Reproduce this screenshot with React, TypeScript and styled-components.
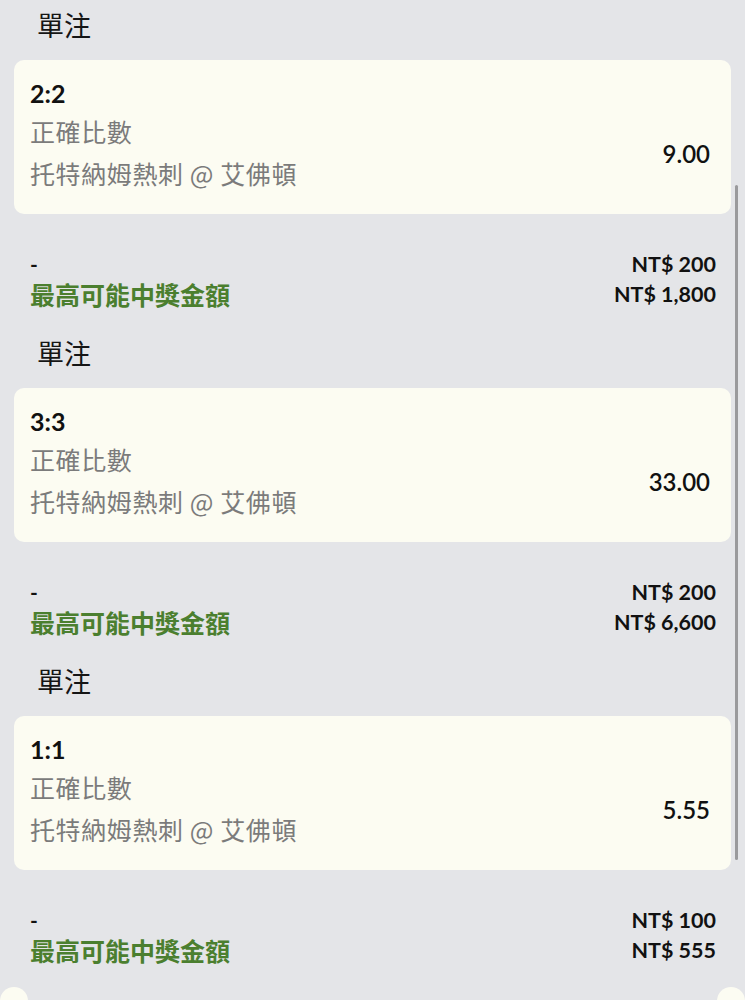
import React from 'react';
import styled, { createGlobalStyle } from 'styled-components';

interface Bet {
  score: string;
  market: string;
  match: string;
  odds: string;
  stake: string;
  payout: string;
}

const bets: Bet[] = [
  { score: '2:2', market: '正確比數', match: '托特納姆熱刺 @ 艾佛頓', odds: '9.00', stake: 'NT$ 200', payout: 'NT$ 1,800' },
  { score: '3:3', market: '正確比數', match: '托特納姆熱刺 @ 艾佛頓', odds: '33.00', stake: 'NT$ 200', payout: 'NT$ 6,600' },
  { score: '1:1', market: '正確比數', match: '托特納姆熱刺 @ 艾佛頓', odds: '5.55', stake: 'NT$ 100', payout: 'NT$ 555' },
];

const GlobalStyle = createGlobalStyle`
  html, body {
    margin: 0;
    padding: 0;
    background: #e4e5e8;
    height: 100%;
    overflow: hidden;
  }
  body {
    font-family: "Lato", "Noto Sans CJK TC", sans-serif;
    color: #111;
  }
`;

const Page = styled.div`
  position: relative;
  width: 745px;
  height: 1000px;
  overflow: hidden;
  padding-top: 7px;
  box-sizing: border-box;
`;

const Section = styled.section`
  display: flex;
  flex-direction: column;
  margin-bottom: 26px;
`;

const SectionTitle = styled.div`
  font-family: "Noto Sans CJK TC", sans-serif;
  font-size: 27px;
  line-height: 36px;
  padding-left: 37px;
  color: #151515;
  margin-bottom: 17px;
`;

const Card = styled.div`
  margin: 0 14px;
  background: #fcfcf2;
  border-radius: 10px;
  padding: 15px 21px 19px 16px;
  display: grid;
  grid-template-columns: 1fr auto;
  height: 154px;
  box-sizing: border-box;
`;

const Info = styled.div`
  display: flex;
  flex-direction: column;
`;

const Score = styled.div`
  font-weight: 700;
  font-size: 25px;
  line-height: 36px;
  color: #111;
`;

const Line = styled.div<{ $h: number }>`
  font-family: "Noto Sans CJK TC", sans-serif;
  font-size: 25px;
  letter-spacing: 0.6px;
  line-height: ${p => p.$h}px;
  color: #7b7b7b;
`;

const Odds = styled.div`
  align-self: center;
  margin-top: 36px;
  font-size: 24px;
  font-weight: 600;
  color: #111;
`;

const Summary = styled.div`
  margin-top: 35px;
  padding: 0 29px 0 30px;
  display: grid;
  grid-template-columns: 1fr auto;
  grid-auto-rows: 30px;
  align-items: center;
`;

const Dash = styled.div`
  font-weight: 700;
  font-size: 21px;
  line-height: 30px;
`;

const PayoutLabel = styled.div`
  font-family: "Noto Sans CJK TC", sans-serif;
  font-weight: 700;
  font-size: 25px;
  line-height: 30px;
  color: #4b7f2f;
`;

const Amount = styled.div`
  font-weight: 700;
  font-size: 21.5px;
  line-height: 30px;
  text-align: right;
  color: #111;
`;

const NextRow = styled.div`
  margin-top: -4px;
  display: flex;
  justify-content: space-between;
`;

const Blob = styled.div`
  width: 28px;
  height: 28px;
  border-radius: 50%;
  background: #fcfcf2;
`;

const ScrollThumb = styled.div`
  position: absolute;
  right: 7px;
  top: 185px;
  width: 3px;
  height: 675px;
  border-radius: 2px;
  background: #9a9a9c;
`;

const BetSlip: React.FC<{ bet: Bet }> = ({ bet }) => (
  <Section>
    <SectionTitle>單注</SectionTitle>
    <Card>
      <Info>
        <Score>{bet.score}</Score>
        <Line $h={40}>{bet.market}</Line>
        <Line $h={44}>{bet.match}</Line>
      </Info>
      <Odds>{bet.odds}</Odds>
    </Card>
    <Summary>
      <Dash>-</Dash>
      <Amount>{bet.stake}</Amount>
      <PayoutLabel>最高可能中獎金額</PayoutLabel>
      <Amount>{bet.payout}</Amount>
    </Summary>
  </Section>
);

export default function App() {
  return (
    <Page>
      <GlobalStyle />
      {bets.map((b, i) => (
        <BetSlip key={i} bet={b} />
      ))}
      <NextRow>
        <Blob />
        <Blob />
      </NextRow>
      <ScrollThumb />
    </Page>
  );
}
